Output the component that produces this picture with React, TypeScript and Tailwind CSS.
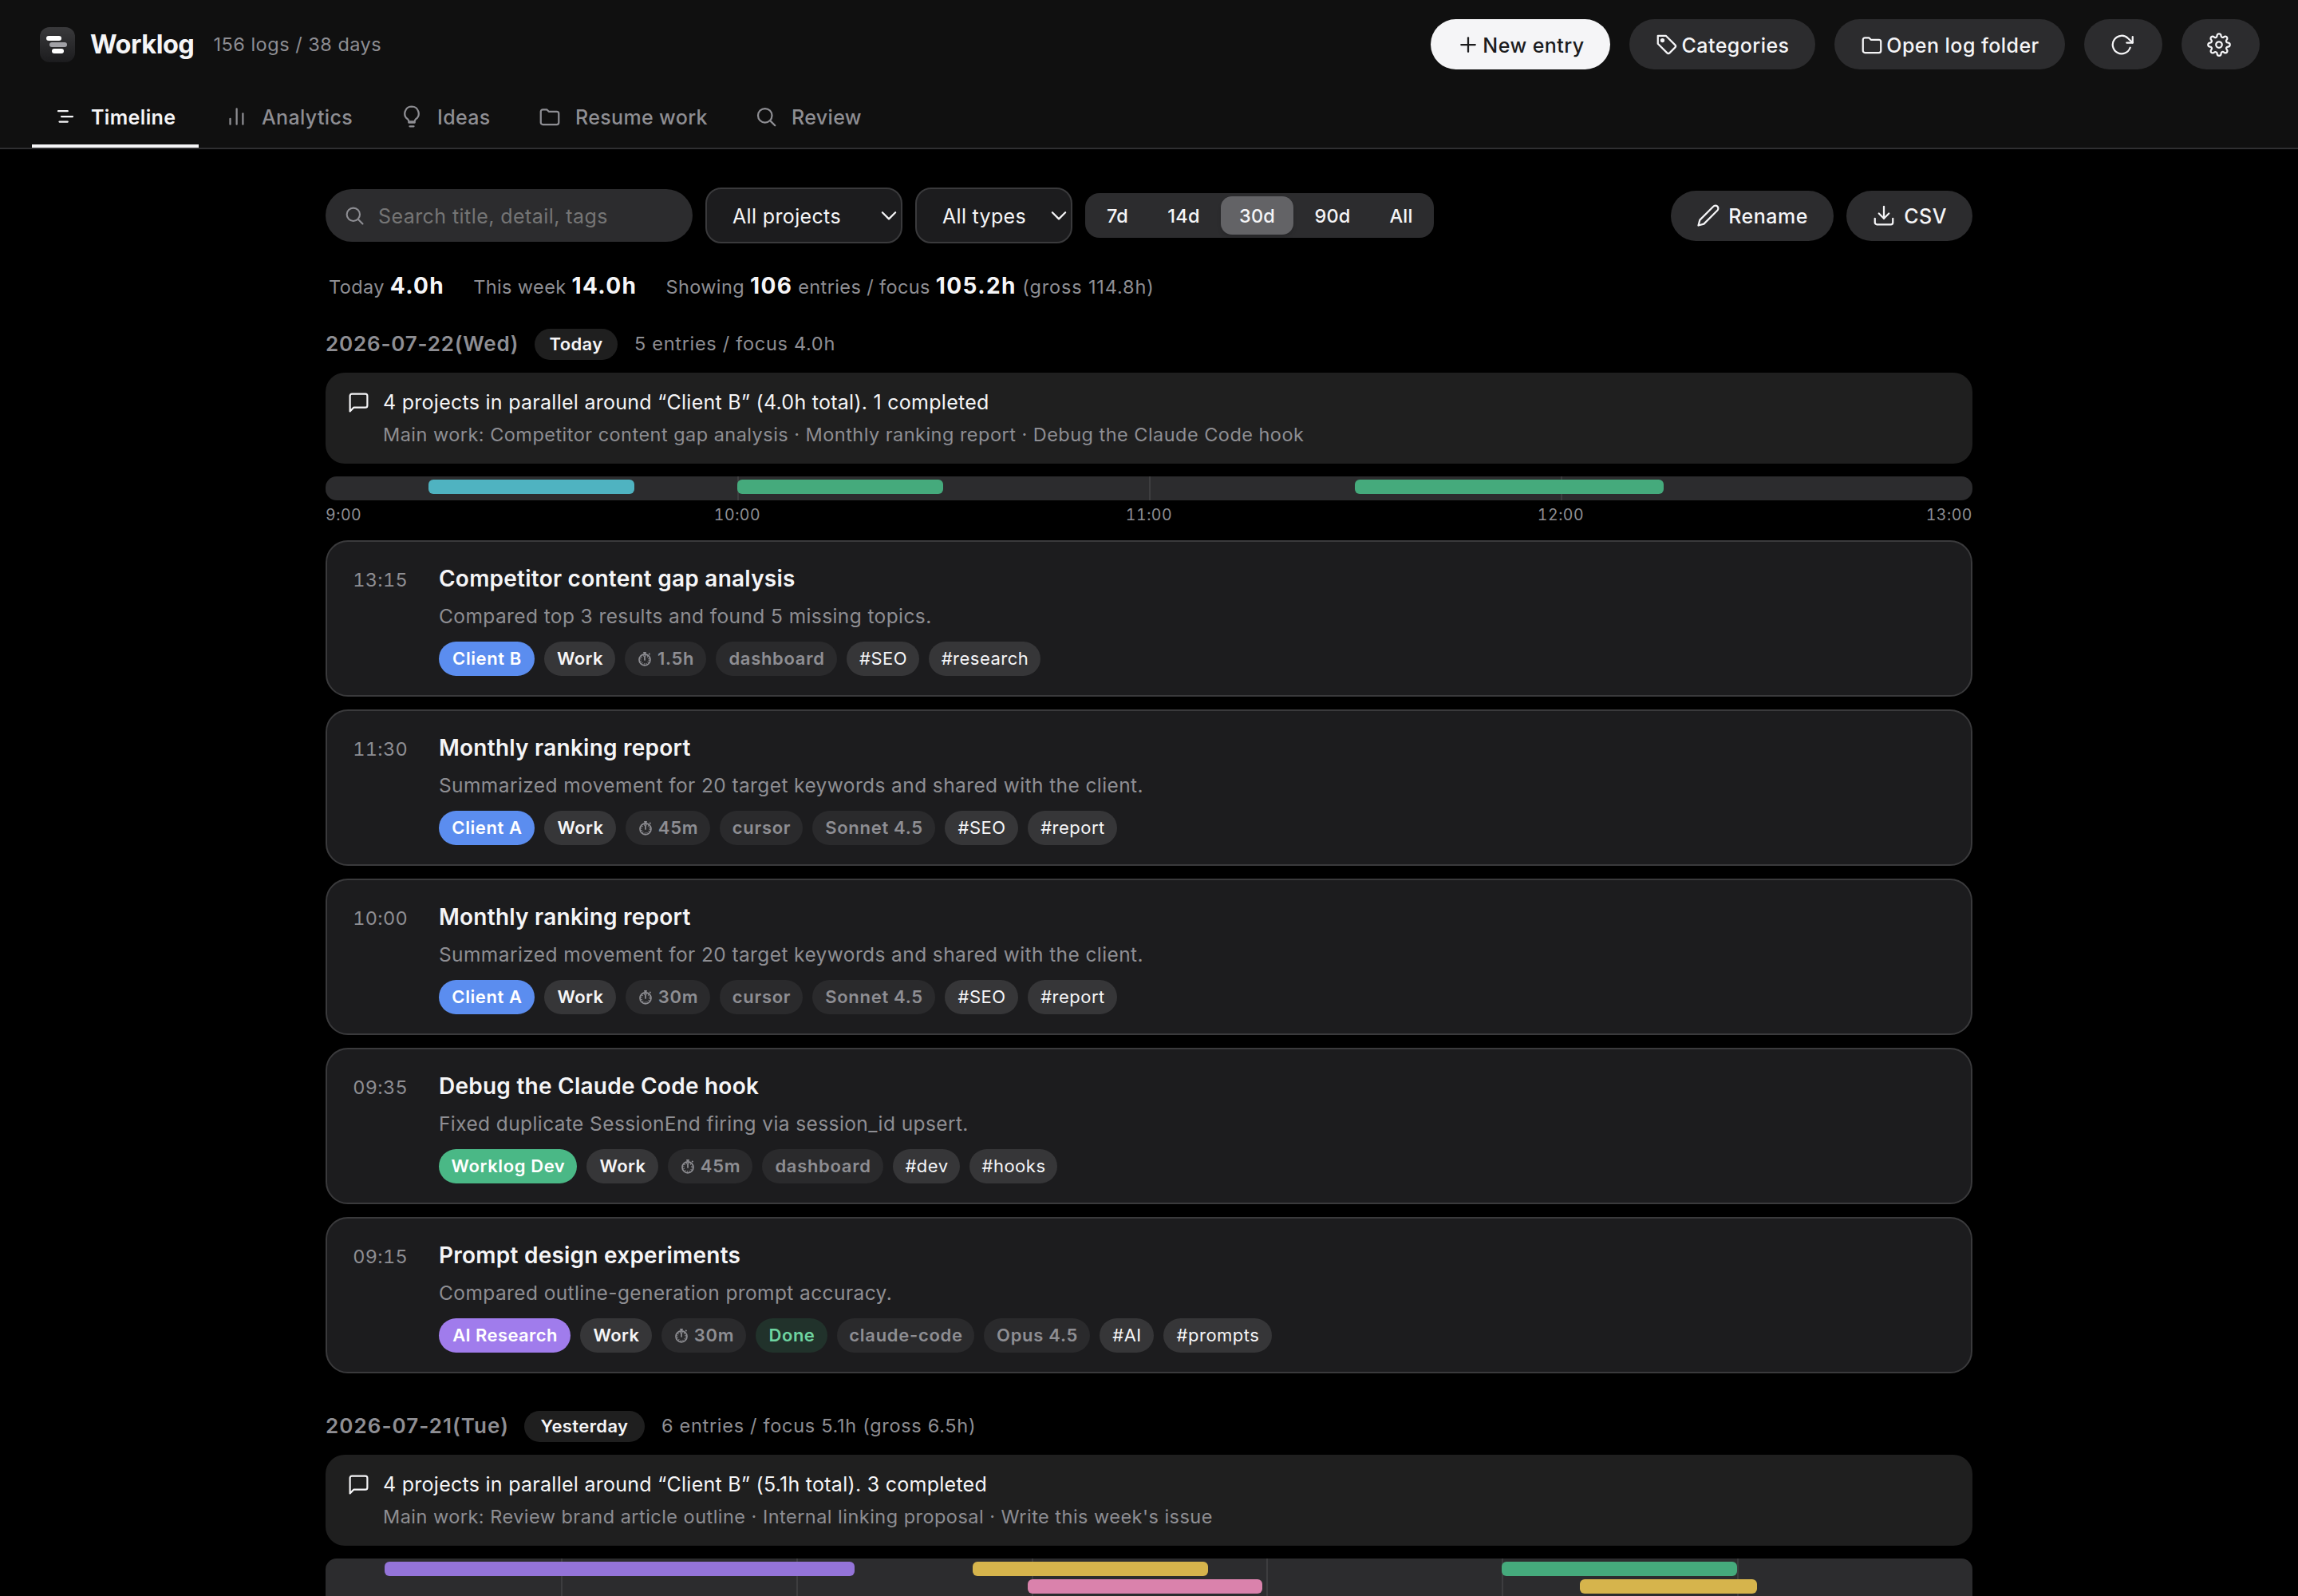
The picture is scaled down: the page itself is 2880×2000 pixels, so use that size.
import React, { useState } from "react";

type Chip = { label: string; kind: string; w: string };

type Entry = {
  time: string;
  title: string;
  detail: string;
  chips: Chip[];
};

type Bar = { start: number; length: number; row: number; color: string };

const chipStyles: Record<string, string> = {
  blue: "bg-[#5b8def] text-white font-semibold tracking-[0.6px]",
  green: "bg-[#4ab886] text-white font-semibold tracking-[0.6px]",
  purple: "bg-[#a07cec] text-white font-semibold tracking-[0.4px]",
  type: "bg-[#363638] text-[#f5f5f7] font-semibold tracking-[0.4px]",
  muted: "bg-[#2a2a2c] text-[#8e8e93] font-semibold tracking-[0.7px]",
  done: "bg-[#21322b] text-[#6ed3a0] font-semibold tracking-[0.5px]",
  tag: "bg-[#363638] text-[#f5f5f7] font-normal tracking-[0.5px]",
};

const entries: Entry[] = [
  {
    time: "13:15",
    title: "Competitor content gap analysis",
    detail: "Compared top 3 results and found 5 missing topics.",
    chips: [
      { label: "Client B", kind: "blue", w: "w-[120px]" },
      { label: "Work", kind: "type", w: "w-[89px]" },
      { label: "1.5h", kind: "time", w: "w-[102px]" },
      { label: "dashboard", kind: "muted", w: "w-[152px]" },
      { label: "#SEO", kind: "tag", w: "w-[91px]" },
      { label: "#research", kind: "tag", w: "w-[140px]" },
    ],
  },
  {
    time: "11:30",
    title: "Monthly ranking report",
    detail: "Summarized movement for 20 target keywords and shared with the client.",
    chips: [
      { label: "Client A", kind: "blue", w: "w-[120px]" },
      { label: "Work", kind: "type", w: "w-[90px]" },
      { label: "45m", kind: "time", w: "w-[106px]" },
      { label: "cursor", kind: "muted", w: "w-[104px]" },
      { label: "Sonnet 4.5", kind: "muted", w: "w-[154px]" },
      { label: "#SEO", kind: "tag", w: "w-[92px]" },
      { label: "#report", kind: "tag", w: "w-[112px]" },
    ],
  },
  {
    time: "10:00",
    title: "Monthly ranking report",
    detail: "Summarized movement for 20 target keywords and shared with the client.",
    chips: [
      { label: "Client A", kind: "blue", w: "w-[120px]" },
      { label: "Work", kind: "type", w: "w-[90px]" },
      { label: "30m", kind: "time", w: "w-[106px]" },
      { label: "cursor", kind: "muted", w: "w-[104px]" },
      { label: "Sonnet 4.5", kind: "muted", w: "w-[154px]" },
      { label: "#SEO", kind: "tag", w: "w-[92px]" },
      { label: "#report", kind: "tag", w: "w-[112px]" },
    ],
  },
  {
    time: "09:35",
    title: "Debug the Claude Code hook",
    detail: "Fixed duplicate SessionEnd firing via session_id upsert.",
    chips: [
      { label: "Worklog Dev", kind: "green", w: "w-[173px]" },
      { label: "Work", kind: "type", w: "w-[90px]" },
      { label: "45m", kind: "time", w: "w-[106px]" },
      { label: "dashboard", kind: "muted", w: "w-[152px]" },
      { label: "#dev", kind: "tag", w: "w-[84px]" },
      { label: "#hooks", kind: "tag", w: "w-[110px]" },
    ],
  },
  {
    time: "09:15",
    title: "Prompt design experiments",
    detail: "Compared outline-generation prompt accuracy.",
    chips: [
      { label: "AI Research", kind: "purple", w: "w-[165px]" },
      { label: "Work", kind: "type", w: "w-[90px]" },
      { label: "30m", kind: "time", w: "w-[106px]" },
      { label: "Done", kind: "done", w: "w-[90px]" },
      { label: "claude-code", kind: "muted", w: "w-[172px]" },
      { label: "Opus 4.5", kind: "muted", w: "w-[133px]" },
      { label: "#AI", kind: "tag", w: "w-[68px]" },
      { label: "#prompts", kind: "tag", w: "w-[136px]" },
    ],
  },
];

const todayBars: Bar[] = [
  { start: 0.25, length: 0.5, row: 0, color: "bg-[#4fb3c1]" },
  { start: 1, length: 0.5, row: 0, color: "bg-[#45aa7c]" },
  { start: 2.5, length: 0.75, row: 0, color: "bg-[#45aa7c]" },
];

const yesterdayBars: Bar[] = [
  { start: 0.25, length: 2, row: 0, color: "bg-[#9474d9]" },
  { start: 2.75, length: 1, row: 0, color: "bg-[#d6b44c]" },
  { start: 5, length: 1, row: 0, color: "bg-[#45aa7c]" },
  { start: 2.983, length: 1, row: 1, color: "bg-[#da82ac]" },
  { start: 5.333, length: 0.75, row: 1, color: "bg-[#d6b44c]" },
];

const iconPaths: Record<string, React.ReactNode> = {
  timeline: (
    <>
      <path d="M4.800 6.500h9.400" />
      <path d="M8 12h11.200" />
      <path d="M6 17.200h8.200" />
    </>
  ),
  chart: (
    <>
      <path d="M6 19.700v-5.500" />
      <path d="M12.500 19.700V4.300" />
      <path d="M18.700 19.700V9" />
    </>
  ),
  bulb: (
    <>
      <path d="M9 18h6" />
      <path d="M10 21.800h4" />
      <path d="M12 2a7 7 0 0 0-4 12.700c.6.5 1 1.300 1 2.300h6c0-1 .4-1.800 1-2.300A7 7 0 0 0 12 2z" />
    </>
  ),
  folder: <path d="M3 7a2 2 0 0 1 2-2h4l2 2h8a2 2 0 0 1 2 2v9a2 2 0 0 1-2 2H5a2 2 0 0 1-2-2z" />,
  search: (
    <>
      <circle cx="11" cy="11" r="7" />
      <path d="m21 21-4.300-4.300" />
    </>
  ),
  plus: (
    <>
      <path d="M12 5v14" />
      <path d="M5 12h14" />
    </>
  ),
  tag: (
    <>
      <path d="M3 3h8l9.300 9.300a1.700 1.700 0 0 1 0 2.400l-5.600 5.600a1.700 1.700 0 0 1-2.400 0L3 11z" />
      <circle cx="7.600" cy="7.600" r="1.200" fill="currentColor" />
    </>
  ),
  refresh: (
    <>
      <path d="M23 4v6h-6" />
      <path d="M20.490 15a9 9 0 1 1-2.120-9.360L23 10" />
    </>
  ),
  gear: (
    <>
      <circle cx="12" cy="12" r="3" />
      <path d="M19.400 15a1.650 1.650 0 0 0 .33 1.820l.06.06a2 2 0 0 1 0 2.830 2 2 0 0 1-2.830 0l-.06-.06a1.650 1.650 0 0 0-1.820-.33 1.650 1.650 0 0 0-1 1.510V21a2 2 0 0 1-2 2 2 2 0 0 1-2-2v-.09A1.650 1.650 0 0 0 9 19.400a1.650 1.650 0 0 0-1.820.33l-.06.06a2 2 0 0 1-2.830 0 2 2 0 0 1 0-2.830l.06-.06a1.650 1.650 0 0 0 .33-1.820 1.650 1.650 0 0 0-1.510-1H3a2 2 0 0 1-2-2 2 2 0 0 1 2-2h.09A1.650 1.650 0 0 0 4.600 9a1.650 1.650 0 0 0-.33-1.820l-.06-.06a2 2 0 0 1 0-2.830 2 2 0 0 1 2.830 0l.06.06a1.650 1.650 0 0 0 1.820.33H9a1.650 1.650 0 0 0 1-1.510V3a2 2 0 0 1 2-2 2 2 0 0 1 2 2v.09a1.650 1.650 0 0 0 1 1.510 1.650 1.650 0 0 0 1.820-.33l.06-.06a2 2 0 0 1 2.830 0 2 2 0 0 1 0 2.830l-.06.06a1.650 1.650 0 0 0-.33 1.820V9a1.650 1.650 0 0 0 1.510 1H21a2 2 0 0 1 2 2 2 2 0 0 1-2 2h-.09a1.650 1.650 0 0 0-1.510 1z" />
    </>
  ),
  pencil: <path d="M17 3a2.830 2.830 0 1 1 4 4L7.500 20.500 2 22l1.500-5.500z" />,
  download: (
    <>
      <path d="M21 15v4a2 2 0 0 1-2 2H5a2 2 0 0 1-2-2v-4" />
      <path d="m7 10 5 5 5-5" />
      <path d="M12 15V3" />
    </>
  ),
  message: <path d="M21 15a2 2 0 0 1-2 2H7l-4 4V5a2 2 0 0 1 2-2h14a2 2 0 0 1 2 2z" />,
  chevron: <path d="m5.500 9 6.500 6.500L18.500 9" />,
};

const Icon = ({ name, className, weight = 1.8 }: { name: string; className: string; weight?: number }) => (
  <svg
    className={`shrink-0 ${className}`}
    viewBox="0 0 24 24"
    fill="none"
    stroke="currentColor"
    strokeWidth={weight}
    strokeLinecap="round"
    strokeLinejoin="round"
    aria-hidden="true"
  >
    {iconPaths[name]}
  </svg>
);

// Small stopwatch shown in front of a duration
const Stopwatch = () => (
  <svg className="mr-[7px] h-[20px] w-[18px] shrink-0" viewBox="0 0 18 20" fill="none" stroke="currentColor" aria-hidden="true">
    <circle cx="9" cy="10.800" r="7" strokeWidth="1.700" />
    <circle cx="9" cy="10.800" r="5.200" strokeWidth="1.600" strokeDasharray="1 1.720" />
    <path d="M9 11V6" strokeWidth="1.700" strokeLinecap="round" />
    <path d="M7.200 1.800h3.600M9 1.800v2M14.200 4.200l1.300-1.200" strokeWidth="1.800" />
  </svg>
);

const tabs = [
  { label: "Timeline", icon: "timeline", w: "w-[209px]" },
  { label: "Analytics", icon: "chart", w: "w-[215px]" },
  { label: "Ideas", icon: "bulb", w: "w-[168px]" },
  { label: "Resume work", icon: "folder", w: "w-[266px]" },
  { label: "Review", icon: "search", w: "w-[190px]" },
];

const ranges = [
  { label: "7d", w: "w-[73px]" },
  { label: "14d", w: "w-[89px]" },
  { label: "30d", w: "w-[91px]" },
  { label: "90d", w: "w-[94px]" },
  { label: "All", w: "w-[74px]" },
];

const Header = () => {
  const [activeTab, setActiveTab] = useState("Timeline");

  return (
    <header className="flex h-[187px] flex-col border-b-2 border-[#2f2f31] bg-[#101010]">
      <div className="flex h-[111px] items-start justify-between pl-[50px] pr-12 pt-6">
        <div className="flex h-[63px] items-center">
          <div className="flex h-11 w-11 flex-col justify-center gap-[2px] rounded-xl bg-linear-to-b from-[#3a3a3c] to-[#1c1c1e] pl-2">
            <span className="h-[6px] w-[19px] rounded-[3px] bg-white" />
            <span className="ml-[4px] h-[6px] w-[22px] rounded-[3px] bg-[#a1a1a6]" />
            <span className="ml-[7px] h-[6px] w-[15px] rounded-[3px] bg-white" />
          </div>
          <h1 className="ml-[19px] mt-[2px] text-[32.5px] font-bold tracking-[-0.5px] text-[#f5f5f7]">Worklog</h1>
          <span className="ml-6 text-[23.5px] tracking-[0.5px] text-[#8e8e93]">156 logs / 38 days</span>
        </div>
        <div className="flex gap-6">
          <button className="flex h-[63px] w-[225px] items-center justify-center gap-[3px] rounded-full bg-[#f5f5f7] text-[25px] font-medium tracking-[0.45px] text-[#1c1c1e]">
            <Icon name="plus" className="h-[30px] w-[30px]" />
            <span className="pt-1">New entry</span>
          </button>
          <button className="flex h-[63px] w-[233px] items-center justify-center gap-[3px] rounded-full bg-[#2c2c2e] text-[25px] font-medium tracking-[0.45px] text-[#f5f5f7]">
            <Icon name="tag" className="h-[30px] w-[30px]" />
            <span className="pt-1">Categories</span>
          </button>
          <button className="flex h-[63px] w-[289px] items-center justify-center gap-[3px] rounded-full bg-[#2c2c2e] text-[25px] font-medium tracking-[0.45px] text-[#f5f5f7]">
            <Icon name="folder" className="h-[30px] w-[30px]" />
            <span className="pt-1">Open log folder</span>
          </button>
          <button className="flex h-[63px] w-[98px] items-center justify-center rounded-full bg-[#2c2c2e] pr-1 text-[#f5f5f7]">
            <Icon name="refresh" className="h-[30px] w-[30px]" />
          </button>
          <button className="flex h-[63px] w-[98px] items-center justify-center rounded-full bg-[#2c2c2e] pr-1 text-[#f5f5f7]">
            <Icon name="gear" className="h-[30px] w-[30px]" />
          </button>
        </div>
      </div>
      <nav className="flex h-[74px] gap-[5px] pl-10">
        {tabs.map((tab) => (
          <button
            key={tab.label}
            onClick={() => setActiveTab(tab.label)}
            className={`flex items-center gap-[17px] border-b-4 pl-[27px] text-[25px] tracking-[0.35px] ${tab.w} ${
              activeTab === tab.label
                ? "border-[#f5f5f7] font-semibold text-[#f5f5f7]"
                : "border-transparent font-medium text-[#8e8e93]"
            }`}
          >
            <Icon name={tab.icon} className="h-[30px] w-[30px]" />
            <span className="whitespace-nowrap pt-[3px]">{tab.label}</span>
          </button>
        ))}
      </nav>
    </header>
  );
};

const Toolbar = () => {
  const [range, setRange] = useState("30d");

  return (
    <div className="flex h-[70px] items-center">
      <div className="flex h-[66px] w-[460px] items-center rounded-full bg-[#2c2c2e] pl-[22px]">
        <Icon name="search" className="h-7 w-7 text-[#8e8e93]" />
        <span className="ml-4 pt-[3px] text-[25px] tracking-[0.43px] text-[#757575]">Search title, detail, tags</span>
      </div>
      <button className="ml-4 flex h-[70px] w-[247px] items-center justify-between rounded-[20px] border-2 border-[#3a3a3c] bg-[#1c1c1e] pl-8 text-[25px] tracking-[0.35px] text-[#f5f5f7]">
        <span className="pt-[3px]">All projects</span>
        <Icon name="chevron" className="h-[30px] w-[30px]" />
      </button>
      <button className="ml-4 flex h-[70px] w-[197px] items-center justify-between rounded-[20px] border-2 border-[#3a3a3c] bg-[#1c1c1e] pl-8 text-[25px] tracking-[0.3px] text-[#f5f5f7]">
        <span className="pt-[3px]">All types</span>
        <Icon name="chevron" className="h-[30px] w-[30px]" />
      </button>
      <div className="ml-4 flex h-14 w-[437px] items-center gap-[2px] rounded-[18px] bg-[#2c2c2e] p-1">
        {ranges.map((r) => (
          <button
            key={r.label}
            onClick={() => setRange(r.label)}
            className={`h-12 rounded-[14px] pt-[2px] text-[23.5px] font-medium tracking-[0.2px] text-[#f5f5f7] ${r.w} ${
              range === r.label ? "bg-[#636366] shadow-md" : ""
            }`}
          >
            {r.label}
          </button>
        ))}
      </div>
      <button className="ml-auto flex h-[63px] w-[204px] items-center justify-center gap-[10px] rounded-full bg-[#2c2c2e] text-[25px] font-medium tracking-[0.5px] text-[#f5f5f7]">
        <Icon name="pencil" className="h-[30px] w-[30px]" />
        <span className="pt-1">Rename</span>
      </button>
      <button className="ml-4 flex h-[63px] w-[158px] items-center justify-center gap-[10px] rounded-full bg-[#2c2c2e] text-[25px] font-medium tracking-[0.5px] text-[#f5f5f7]">
        <Icon name="download" className="h-[30px] w-[30px]" />
        <span className="pt-1">CSV</span>
      </button>
    </div>
  );
};

const Stat = ({ children }: { children: string }) => (
  <b className="text-[28px] font-bold tracking-[1.4px] text-[#f5f5f7]">{children}</b>
);

const Stats = () => (
  <div className="mt-8 flex h-10 items-baseline gap-9 whitespace-pre pl-1 text-[23.5px] tracking-[0.38px] text-[#8e8e93]">
    <span>
      Today <Stat>4.0h</Stat>
    </span>
    <span>
      This week <Stat>14.0h</Stat>
    </span>
    <span>
      Showing <Stat>106</Stat> entries / focus <Stat>105.2h</Stat>
      <span className="tracking-[0.85px]"> (gross 114.8h)</span>
    </span>
  </div>
);

type DayHeadingProps = { date: string; dateClass: string; badge: string; badgeWidth: string; count: string };

const DayHeading = ({ date, dateClass, badge, badgeWidth, count }: DayHeadingProps) => (
  <div className="flex h-[39px] items-center">
    <h2 className={`-mt-[2px] whitespace-nowrap text-[26px] font-semibold text-[#8e8e93] ${dateClass}`}>{date}</h2>
    <span className={`flex h-[39px] items-center justify-center rounded-full bg-[#1f1f1f] text-[22px] font-semibold tracking-[0.4px] text-[#f5f5f7] ${badgeWidth}`}>
      {badge}
    </span>
    <span className="-mt-[1px] ml-[21px] text-[23.5px] tracking-[0.7px] text-[#8e8e93]">{count}</span>
  </div>
);

const Summary = ({ text, work }: { text: string; work: string }) => (
  <div className="mt-4 flex h-[114px] rounded-3xl bg-[#1f1f1f] pl-7 pt-4">
    <Icon name="message" className="-ml-[1px] mt-[7px] h-[29px] w-[29px] text-[#f5f5f7]" />
    <div className="ml-4 flex flex-col">
      <p className="h-[41px] text-[25px] leading-[42px] tracking-[0.27px] text-[#f5f5f7]">{text}</p>
      <p className="text-[23.5px] leading-[41px] tracking-[0.47px] text-[#8e8e93]">{work}</p>
    </div>
  </div>
);

const Track = ({ hours, bars, height }: { hours: number; bars: Bar[]; height: string }) => (
  <div className={`relative mt-4 overflow-hidden rounded-[14px] bg-[#2c2c2e] ${height}`}>
    {Array.from({ length: hours - 1 }, (_, i) => (
      <span key={i} className="absolute inset-y-0 w-[2px] bg-[#3d3d3f]" style={{ left: `${((i + 1) / hours) * 100}%` }} />
    ))}
    {bars.map((bar, i) => (
      <span
        key={i}
        className={`absolute h-[18px] rounded-[6px] ${bar.row === 0 ? "top-1" : "top-[26px]"} ${bar.color}`}
        style={{ left: `${(bar.start / hours) * 100}%`, width: `${(bar.length / hours) * 100}%` }}
      />
    ))}
  </div>
);

const EntryCard = ({ entry }: { entry: Entry }) => (
  <article className="flex h-[196px] rounded-[28px] border-2 border-[#3a3a3c] bg-[#1c1c1e] pt-[26px]">
    <time className="w-[102px] pr-[1px] text-right text-[23.5px] leading-[44px] tracking-[0.3px] text-[#8e8e93] tabular-nums">{entry.time}</time>
    <div className="ml-[38px] flex flex-col">
      <h3 className="h-[42px] text-[28px] font-semibold leading-[41px] tracking-[0.24px] text-[#f5f5f7]">{entry.title}</h3>
      <p className="mt-[6px] h-[40px] text-[24.5px] leading-[39px] tracking-[0.4px] text-[#8e8e93]">{entry.detail}</p>
      <div className="mt-[11px] flex gap-3">
        {entry.chips.map((chip) => (
          <span
            key={chip.label}
            className={`flex h-[43px] items-center justify-center whitespace-nowrap rounded-full pl-[1px] text-[22px] ${chip.w} ${
              chip.kind === "time" ? chipStyles.muted : chipStyles[chip.kind]
            }`}
          >
            {chip.kind === "time" && <Stopwatch />}
            {chip.label}
          </span>
        ))}
      </div>
    </div>
  </article>
);

const App = () => {
  return (
    <div className="h-[2000px] w-[2880px] overflow-hidden bg-black font-['Inter',sans-serif]">
      <Header />
      <main className="mx-auto w-[2064px] pt-12">
        <Toolbar />
        <Stats />
        <div className="mt-[35px]">
          <DayHeading
            date="2026-07-22(Wed)"
            dateClass="w-[262px] tracking-[0.8px]"
            badge="Today"
            badgeWidth="w-[104px]"
            count="5 entries / focus 4.0h"
          />
          <Summary
            text="4 projects in parallel around “Client B” (4.0h total). 1 completed"
            work="Main work: Competitor content gap analysis · Monthly ranking report · Debug the Claude Code hook"
          />
          <Track hours={4} bars={todayBars} height="h-[30px]" />
          <div className="relative h-[50px] text-[19.5px] tracking-[0.5px] text-[#8e8e93] tabular-nums">
            <span className="absolute left-0 top-1">9:00</span>
            <span className="absolute left-1/4 top-1 -translate-x-1/2">10:00</span>
            <span className="absolute left-1/2 top-1 -translate-x-1/2">11:00</span>
            <span className="absolute left-3/4 top-1 -translate-x-1/2">12:00</span>
            <span className="absolute right-0 top-1">13:00</span>
          </div>
          <div className="flex flex-col gap-4">
            {entries.map((entry) => (
              <EntryCard key={entry.time} entry={entry} />
            ))}
          </div>
        </div>
        <div className="mt-[47px]">
          <DayHeading
            date="2026-07-21(Tue)"
            dateClass="w-[249px] tracking-[1.05px]"
            badge="Yesterday"
            badgeWidth="w-[151px]"
            count="6 entries / focus 5.1h (gross 6.5h)"
          />
          <Summary
            text="4 projects in parallel around “Client B” (5.1h total). 3 completed"
            work="Main work: Review brand article outline · Internal linking proposal · Write this week's issue"
          />
          <Track hours={7} bars={yesterdayBars} height="h-[74px]" />
        </div>
      </main>
    </div>
  );
};

export default App;
